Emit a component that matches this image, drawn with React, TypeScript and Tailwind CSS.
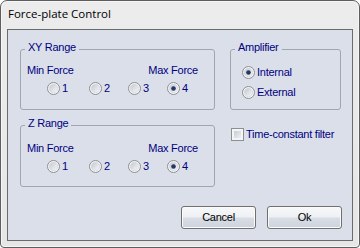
import React, { useId } from "react";

function Radio({ checked }: { checked?: boolean }) {
  const raw = useId();
  const id = "g" + raw.replace(/[^a-zA-Z0-9]/g, "");
  return (
    <svg width="13" height="13" viewBox="0 0 13 13" className="shrink-0 block">
      <defs>
        <linearGradient id={id} x1="0" y1="0" x2="1" y2="1">
          <stop offset="0" stopColor="#c3c8d1" />
          <stop offset="1" stopColor="#f7f8fa" />
        </linearGradient>
      </defs>
      <circle cx="6.5" cy="6.5" r="6" fill="#f5f5f6" stroke="#8b8e93" strokeWidth="1" />
      <circle cx="6.5" cy="6.5" r="4.2" fill={`url(#${id})`} stroke="#d0d3d8" strokeWidth="0.6" />
      {checked && <circle cx="6.5" cy="6.5" r="2.3" fill="#233863" />}
    </svg>
  );
}

function RadioItem({ label, checked, className }: { label: string; checked?: boolean; className?: string }) {
  return (
    <div className={`flex items-center gap-[2px] ${className ?? ""}`}>
      <Radio checked={checked} />
      <span className="leading-[13px]">{label}</span>
    </div>
  );
}

function Group({ label, className, children }: { label: string; className: string; children: React.ReactNode }) {
  return (
    <div className={`relative border border-[#a0a6b0] rounded-[3px] ${className}`}>
      <span className="absolute left-[4px] top-[-9px] px-[3px] bg-[#dbdfe9] leading-[13px]">{label}</span>
      {children}
    </div>
  );
}

function Button({ label }: { label: string }) {
  return (
    <div className="w-[75px] h-[23px] rounded-[3px] border border-[#707070] shadow-[inset_0_0_0_1px_#fbfbfc] bg-[linear-gradient(#f7f8fa_0%,#eef0f3_48%,#d8dde5_52%,#cdd3dd_100%)] flex items-center justify-center text-black leading-[13px]">
      {label}
    </div>
  );
}

function RangeGroup({ label, topPad }: { label: string; topPad: "xy" | "z" }) {
  return (
    <Group label={label} className={topPad === "xy" ? "h-[61px]" : "h-[62px]"}>
      <div className={`${topPad === "xy" ? "pt-[14px]" : "pt-[16px]"} pl-[6px] pr-[16px] flex justify-between leading-[13px]`}>
        <span>Min Force</span>
        <span>Max Force</span>
      </div>
      <div className="mt-[5px] pl-[26px] flex">
        <RadioItem label="1" className="w-[42px]" />
        <RadioItem label="2" className="w-[39px]" />
        <RadioItem label="3" className="w-[39px]" />
        <RadioItem label="4" checked />
      </div>
    </Group>
  );
}

export default function App() {
  return (
    <div className="w-[360px] h-[248px] bg-white">
      <div className="w-[360px] h-[248px] rounded-t-[7px] rounded-b-[4px] border border-[#5e5e5e] bg-[linear-gradient(#ececec,#e6e6e6)] shadow-[inset_0_0_0_1px_#f6f6f6] flex flex-col font-['Liberation_Sans',Arial,sans-serif] text-[11px] leading-[13px] tracking-[-0.25px] text-[#000080]">
        <div className="h-[28px] shrink-0 pl-[7px] pt-[5px] font-['Open_Sans',sans-serif] text-[11.5px] leading-[15px] tracking-normal text-black">
          Force-plate Control
        </div>
        <div className="mx-[6px] h-[212px] shrink-0 border border-[#6b6b6b] bg-[#dbdfe9] pl-[12px] pt-[19px] flex flex-col">
          <div className="flex gap-[15px]">
            <div className="w-[195px] flex flex-col gap-[15px]">
              <RangeGroup label="XY Range" topPad="xy" />
              <RangeGroup label="Z Range" topPad="z" />
            </div>
            <div className="w-[111px] flex flex-col">
              <Group label="Amplifier" className="h-[61px]">
                <div className="pt-[16px] pl-[11px] flex flex-col gap-[7px]">
                  <RadioItem label="Internal" checked />
                  <RadioItem label="External" />
                </div>
              </Group>
              <div className="mt-[18px] ml-[1px] flex items-center gap-[2px]">
                <div className="w-[13px] h-[13px] shrink-0 border border-[#8e8f8f] bg-[#f4f5f7] p-[2px]">
                  <div className="w-full h-full bg-[linear-gradient(135deg,#c6ccd6,#eef0f4)]" />
                </div>
                <span className="leading-[13px]">Time-constant filter</span>
              </div>
            </div>
          </div>
          <div className="mt-[19px] pr-[10px] flex justify-end gap-[11px]">
            <Button label="Cancel" />
            <Button label="Ok" />
          </div>
        </div>
      </div>
    </div>
  );
}
